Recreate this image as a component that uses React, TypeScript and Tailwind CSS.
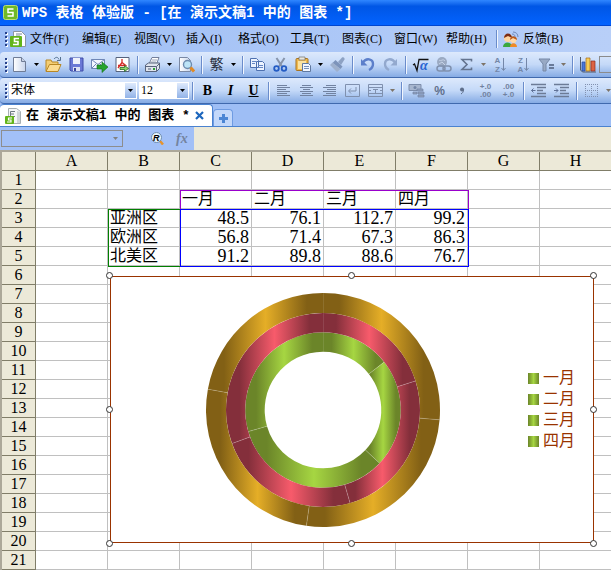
import React from 'react'

const menus = ['文件(F)', '编辑(E)', '视图(V)', '插入(I)', '格式(O)', '工具(T)', '图表(C)', '窗口(W)', '帮助(H)']

const columns = ['A', 'B', 'C', 'D', 'E', 'F', 'G', 'H']
const months = ['一月', '二月', '三月', '四月']
const regions = [
  { name: '亚洲区', values: [48.5, 76.1, 112.7, 99.2] },
  { name: '欧洲区', values: [56.8, 71.4, 67.3, 86.3] },
  { name: '北美区', values: [91.2, 89.8, 88.6, 76.7] },
]

const rings = [
  { inner: 58.3, outer: 77.8, fill: 'url(#green)' },
  { inner: 77.8, outer: 97, fill: 'url(#pink)' },
  { inner: 97, outer: 117, fill: 'url(#gold)' },
]

// content of one cell, row is 1-based and col 0 is column A
const cellText = (row: number, col: number) => {
  if (row === 2 && col > 1 && col < 6) return months[col - 2]
  const region = regions[row - 3]
  if (!region) return ''
  if (col === 1) return region.name
  if (col > 1 && col < 6) return region.values[col - 2].toFixed(1)
  return ''
}

const Grip = () => (
  <svg width="8" height="16" className="shrink-0" aria-hidden="true">
    {[1, 5, 9, 13].map((y) => (
      <g key={y}>
        <rect x="6" y={y + 1} width="2" height="2" fill="#fff" />
        <rect x="5" y={y} width="2" height="2" fill="#27418a" />
      </g>
    ))}
  </svg>
)

const Sep = () => (
  <span className="flex h-[18px] w-[7px] shrink-0 justify-center" aria-hidden="true">
    <span className="w-px bg-[#6a8ccb]" />
    <span className="w-px bg-[#f1f6fe]" />
  </span>
)

const Caret = ({ off = false }: { off?: boolean }) => (
  <button aria-label="更多" className="flex h-5 w-[11px] shrink-0 items-center justify-center">
    <svg width="5" height="3" className={off ? 'text-[#7d7468]' : 'text-black'}>
      <path d="M0 0h5L2.5 3z" fill="currentColor" />
    </svg>
  </button>
)

const Tool = ({ label, children }: { label: string; children: React.ReactNode }) => (
  <button aria-label={label} title={label} className="flex h-[22px] w-[23px] shrink-0 items-center justify-center text-black">
    {children}
  </button>
)

const Icon = ({ children }: { children: React.ReactNode }) => (
  <svg width="17" height="17" viewBox="0 0 17 17" fill="none">{children}</svg>
)

const Lines = ({ rows }: { rows: number[][] }) => (
  <Icon>
    {rows.map(([x, w], i) => (
      <rect key={i} x={x} y={3 + i * 2} width={w} height="1" fill="#7182a0" />
    ))}
  </Icon>
)

const Indent = ({ flip = false }: { flip?: boolean }) => (
  <Icon>
    <path d="M1 2.5h15M7 5.5h9M7 8.5h6M7 11.5h9M1 14.5h15" stroke="#6c7b96" strokeWidth="1.4" />
    <path d={flip ? 'M1 8.5h4M3 6.5l2 2-2 2' : 'M1.5 8.5h4M3.5 6.5l-2 2 2 2'} stroke="#5f7197" />
  </Icon>
)

const SheetLogo = () => (
  <svg width="17" height="18" viewBox="0 0 17 18" aria-hidden="true">
    <path d="M3.5 1.5h8l4 4v11h-12z" fill="#fff" stroke="#8b95a5" />
    <path d="M6 4h6M6 6h4" stroke="#778498" />
    <rect x="0" y="6" width="12" height="11" rx="1" fill="#62b51a" />
    <path d="M9 8.5H4.5v3H8v3H3" fill="none" stroke="#fff" strokeWidth="1.6" />
  </svg>
)

const TabLogo = () => (
  <svg width="17" height="18" viewBox="0 0 17 18" aria-hidden="true">
    <path d="M3.500 1.500h8l4 3v12h-12z" fill="#f4f6f7" stroke="#a9b0b4" />
    <path d="M12 4v12h3V5z" fill="#cfd6d8" />
    <path d="M10 4.500H5.500v5H10M5.500 7H9" fill="none" stroke="#6d7880" />
    <rect x="0" y="9" width="9" height="8" rx="1" fill="#62b51a" />
    <path d="M7 11H3.500v2H6v2H2" fill="none" stroke="#fff" strokeWidth="1.200" />
  </svg>
)

const StandardBar = () => (
  <div role="toolbar" aria-label="常用" className="flex h-[26px] items-center overflow-hidden rounded-l border-b border-[#4069ad] bg-linear-to-b from-[#dde9fc] via-[#c4d9f8] to-[#86abe4]">
    <Grip />
    <Tool label="新建">
      <Icon>
        <path d="M2.5 1.5h8l4 4v10h-12z" fill="url(#paper)" stroke="#6f7c96" />
        <path d="M10.500 1.500v4h4" fill="#c9d3e6" stroke="#6f7c96" />
      </Icon>
    </Tool>
    <Caret />
    <Tool label="打开">
      <Icon>
        <path d="M1 15V4h5l1 2h6v3" fill="#f3cd74" stroke="#b88724" />
        <path d="M1 15.500 4.500 8.500H16l-3 7z" fill="#fbdc92" stroke="#b88724" />
        <path d="M9 3c2-2.500 4-2 5 .5M15.500 1v3.500H12" stroke="#56718f" />
      </Icon>
    </Tool>
    <Tool label="保存">
      <Icon>
        <path d="M2 2h13v13H3l-1-1z" fill="#6b79d6" stroke="#3f4ca8" />
        <path d="M5 2h7v6H5z" fill="#eef1fb" />
        <path d="M5 11h7v4H5z" fill="#dde1f4" />
        <path d="M6 12h2v3H6z" fill="#39459b" />
      </Icon>
    </Tool>
    <Tool label="发送">
      <Icon>
        <path d="M.5 3.500h13v9H.5z" fill="#f3f7ff" stroke="#6f87b6" />
        <path d="M.5 3.500 7 8.500l6.500-5M.5 12.500 5 8M13.500 12.500 9 8" stroke="#6f87b6" />
        <path d="M6 9h5V6l6 5-6 5.500v-3.500H6z" fill="#26a32d" stroke="#127019" strokeWidth=".6" />
      </Icon>
    </Tool>
    <Tool label="输出 PDF">
      <Icon>
        <path d="M2 1.500h13v14H2z" fill="#fff" stroke="#56637d" />
        <path d="M8 3v3.500L4 12M8 6.500l4.500 3.500M4 9.500h7" stroke="#d52925" strokeWidth="1.300" />
        <path d="M6 11.500h4.500V9.500l4 3-4 3v-2H6z" fill="#8ed36c" stroke="#246a21" strokeWidth=".8" />
      </Icon>
    </Tool>
    <Sep />
    <Tool label="打印">
      <Icon>
        <path d="M5 8 8 1.500h7L12.500 8z" fill="#fff" stroke="#75809a" />
        <path d="M8 4h5M7 6h5" stroke="#9aa4bb" />
        <path d="m1.500 9 3-2h11v5.500l-3 3h-11z" fill="#dfe4ed" stroke="#59647d" />
        <path d="M1.500 10.500h11l3-3M12.500 10.500v5" stroke="#59647d" />
        <path d="M4 13h3" stroke="#536078" /><path d="M9 13h2" stroke="#2c9e34" strokeWidth="2" />
      </Icon>
    </Tool>
    <Caret />
    <Tool label="打印预览">
      <Icon>
        <path d="M1.500 1.500h8l3 3v11h-11z" fill="url(#paper)" stroke="#7b89a4" />
        <circle cx="9.500" cy="8.500" r="4" fill="#bce4f7" stroke="#6e8caf" strokeWidth="1.400" />
        <path d="m12.500 11.500 3.500 4" stroke="#e08a25" strokeWidth="3" />
      </Icon>
    </Tool>
    <Sep />
    <Tool label="繁简转换"><span className="text-sm text-[#262d3b]">繁</span></Tool>
    <Caret />
    <Sep />
    <Tool label="复制">
      <Icon>
        <path d="M1.500 2.500h6l2 2v7h-8zM7.500 5.500h6l2 2v7h-8z" fill="#edf4ff" stroke="#4e71b0" />
        <path d="M3 5.500h4M3 7.500h3M9 9.500h5M9 11.500h5" stroke="#6688c5" />
      </Icon>
    </Tool>
    <Tool label="剪切">
      <Icon>
        <path d="M4.500 2 10 10.500M12.500 2 7 10.500" stroke="#8794aa" strokeWidth="2" />
        <circle cx="4.500" cy="12.500" r="2.300" stroke="#245cc4" strokeWidth="1.800" />
        <circle cx="12" cy="12.500" r="2.300" stroke="#245cc4" strokeWidth="1.800" />
      </Icon>
    </Tool>
    <Tool label="粘贴">
      <Icon>
        <rect x="1" y="2.500" width="12" height="12" rx="1" fill="#efb94f" stroke="#a97420" />
        <path d="M3 5h8v8H3z" fill="#fbe2a0" /><path d="M4 1h6v3H4z" fill="#e9e6dd" stroke="#74706a" strokeWidth=".7" />
        <path d="M7.500 7.500h6l2 2v6h-8z" fill="#f2f6ff" stroke="#5f789f" />
        <path d="M9 10.500h5M9 12.500h5" stroke="#7791ba" />
      </Icon>
    </Tool>
    <Caret />
    <Tool label="格式刷">
      <Icon>
        <path d="M9 6 13 1.500c1.500-1 3 .5 2.500 2L12 9z" fill="#8da2c3" />
        <path d="m6.500 4 7 6.500-2 2.500-8-6z" fill="#7d94ba" />
        <path d="M3.500 6.500 1 9l7 7 3.500-3z" fill="#9eb0cc" />
      </Icon>
    </Tool>
    <Sep />
    <Tool label="撤销">
      <Icon>
        <path d="M4 6.500c3-5 10-4 10 1.500 0 3-2 5-4 6" stroke="#5c7fca" strokeWidth="2.400" /><path d="M2 3v6.500h6.500z" fill="#5c7fca" />
      </Icon>
    </Tool>
    <Tool label="恢复">
      <Icon>
        <path d="M13 6.500C10 1.500 3 2.500 3 8c0 3 2 5 4 6" stroke="#93a9ce" strokeWidth="2.400" /><path d="M15 3v6.500H8.500z" fill="#93a9ce" />
      </Icon>
    </Tool>
    <Sep />
    <Tool label="公式">
      <Icon>
        <path d="m1 9 1.500-1L5 14.500 7 3.500h9.500" stroke="#111" strokeWidth="1.300" />
        <text x="8" y="14" fontSize="14" fontStyle="italic" fontWeight="bold" fontFamily="Liberation Serif, serif" fill="#2864d2">α</text>
      </Icon>
    </Tool>
    <Tool label="超链接">
      <Icon>
        <circle cx="7" cy="6" r="5" fill="#9baac2" /><path d="M4 4c2 2 4-2 6 1M4 8l3-2 3 3" stroke="#c6d3e8" />
        <rect x="2" y="10" width="8" height="5" rx="2.500" stroke="#8091ae" strokeWidth="1.500" />
        <rect x="8" y="10" width="8" height="5" rx="2.500" stroke="#8091ae" strokeWidth="1.500" />
      </Icon>
    </Tool>
    <Tool label="求和">
      <Icon><path d="M13.500 5.500v-2H4l5 5-5 5h9.500v-2" stroke="#64748f" strokeWidth="1.600" /></Icon>
    </Tool>
    <Caret off />
    {['AZ', 'ZA'].map((order) => (
      <Tool key={order} label={order === 'AZ' ? '升序' : '降序'}>
        <span className="flex items-center font-['Liberation_Sans',sans-serif] text-[8px] leading-[9px] font-bold text-[#7487a8]">
          <span className="flex flex-col">
            <span>{order[0]}</span>
            <span>{order[1]}</span>
          </span>
          <svg width="6" height="14" viewBox="0 0 6 14" fill="none">
            <path d="M3.500 0v12M1.500 10l2 2.500 2-2.500" stroke="currentColor" />
          </svg>
        </span>
      </Tool>
    ))}
    <Tool label="筛选">
      <Icon>
        <path d="M1 3h11L8 8v7H5V8z" fill="#98a9c4" stroke="#7688a6" /><path d="M11 9h5M11 12h5" stroke="#687a99" strokeWidth="2" />
      </Icon>
    </Tool>
    <Caret off />
    <Sep />
    <Tool label="图表类型">
      <Icon>
        <path d="M1.500 1v13l2 2H17" stroke="#535b68" />
        <path d="M3 6h3v9H3z" fill="#4a77d9" stroke="#274b9e" strokeWidth=".7" />
        <path d="M7 2h4v13H7z" fill="#f6ce56" stroke="#a76814" strokeWidth=".7" />
        <path d="M12 5h4v10h-4z" fill="#dd6344" stroke="#8c2c20" strokeWidth=".7" />
      </Icon>
    </Tool>
    <span className="h-[17px] w-4 shrink-0 border border-[#8b8b8b]" />
  </div>
)

const FormatBar = () => (
  <div role="toolbar" aria-label="格式" className="flex h-[26px] items-center overflow-hidden rounded-l border-b border-[#4069ad] bg-linear-to-b from-[#dde9fc] via-[#c4d9f8] to-[#86abe4]">
    <Grip />
    <label className="ml-px flex h-[17px] w-32 shrink-0 bg-white">
      <select aria-label="字体" className="min-w-0 flex-1 appearance-none pl-0.5 text-xs leading-[17px] text-black">
        <option>宋体</option>
      </select>
      <span className="m-px flex w-[11px] items-center justify-center bg-linear-to-b from-[#dfeafc] to-[#92b3e7]">
        <svg width="5" height="3"><path d="M0 0h5L2.500 3z" /></svg>
      </span>
    </label>
    <label className="ml-0.5 flex h-[17px] w-[50px] shrink-0 bg-white">
      <select aria-label="字号" className="min-w-0 flex-1 appearance-none pl-0.5 text-xs leading-[17px] text-black">
        <option>12</option>
      </select>
      <span className="m-px flex w-[11px] items-center justify-center bg-linear-to-b from-[#dfeafc] to-[#92b3e7]">
        <svg width="5" height="3"><path d="M0 0h5L2.500 3z" /></svg>
      </span>
    </label>
    <Sep />
    <Tool label="加粗"><b className="text-sm font-black">B</b></Tool>
    <Tool label="倾斜"><b className="text-sm italic">I</b></Tool>
    <Tool label="下划线"><b className="text-sm underline">U</b></Tool>
    <Sep />
    <Tool label="左对齐"><Lines rows={[[2, 10], [2, 13], [2, 9], [2, 13], [2, 10], [2, 13]]} /></Tool>
    <Tool label="居中"><Lines rows={[[4, 9], [2, 13], [5, 7], [2, 13], [4, 9], [2, 13]]} /></Tool>
    <Tool label="右对齐"><Lines rows={[[5, 10], [2, 13], [6, 9], [2, 13], [5, 10], [2, 13]]} /></Tool>
    <Tool label="自动换行">
      <Icon><path d="M1.500 2.500h14v12h-14zM12 5v4H5M7 6.500 4.500 9 7 11.500" stroke="#7f90ae" /></Icon>
    </Tool>
    <Tool label="合并居中">
      <Icon><path d="M1.500 2.500h14v12h-14zM1.500 5.500h14M1.500 11.500h14M6 7.500h5M8.500 7.500v4M2 8.500h2M13 8.500h2" stroke="#7f90ae" /></Icon>
    </Tool>
    <Caret off />
    <Sep />
    <Tool label="货币样式">
      <Icon>
        <path d="M1 2.500h12v6H1z" fill="#a7b6cf" stroke="#7c8dab" /><circle cx="7" cy="5.500" r="1.500" fill="#7386a7" />
        <path d="M9 7h6v2H9zM10 10h6v2h-6zM10 13h6v2h-6zM5 10h4v2H5z" fill="#93a4c1" stroke="#7183a3" strokeWidth=".7" />
      </Icon>
    </Tool>
    <Tool label="百分比"><span className="font-['Liberation_Sans',sans-serif] text-xs font-bold text-[#5f6f8b]">%</span></Tool>
    <Tool label="千位分隔">
      <Icon><circle cx="8" cy="7.500" r="2" fill="#5f6f8b" /><path d="M9.500 7.500c0 2.500-1 3.500-2.500 4.500" stroke="#5f6f8b" /></Icon>
    </Tool>
    {[['+.0', '.00'], ['.00', '+.0']].map((digits, i) => (
      <Tool key={i} label={i ? '减少小数' : '增加小数'}>
        <span className="text-right font-['Liberation_Sans',sans-serif] text-[8px] leading-2 font-bold text-[#72829f]">
          {digits[0]}<br />{digits[1]}
        </span>
      </Tool>
    ))}
    <Sep />
    <Tool label="减少缩进"><Indent /></Tool>
    <Tool label="增加缩进"><Indent flip /></Tool>
    <Sep />
    <Tool label="边框">
      <Icon><path d="M2 2.500h13M2 8.500h13M2 14.500h13M2.500 2v13M8.500 2v13M14.500 2v13" stroke="#8291b0" strokeDasharray="1 1" /></Icon>
    </Tool>
    <Caret off />
  </div>
)

const point = (r: number, turn: number) => {
  const a = turn * Math.PI * 2
  return `${(r * Math.sin(a)).toFixed(2)} ${(-r * Math.cos(a)).toFixed(2)}`
}

const Doughnut = () => (
  <svg viewBox="-118 -118 236 236" width="236" height="236" className="shrink-0" role="img" aria-label="圆环图">
    {rings.map((ring, i) => {
      const values = regions[i].values
      const total = values.reduce((a, b) => a + b, 0)
      let start = 0
      return values.map((value, k) => {
        const from = start
        const to = start + value / total
        start = to
        const large = to - from > 0.5 ? 1 : 0
        return (
          <g key={`${i}-${k}`}>
            <path
              d={`M${point(ring.outer, from)}A${ring.outer} ${ring.outer} 0 ${large} 1 ${point(ring.outer, to)}L${point(ring.inner, to)}A${ring.inner} ${ring.inner} 0 ${large} 0 ${point(ring.inner, from)}Z`}
              fill={ring.fill}
            />
            <path d={`M${point(ring.inner, from)}L${point(ring.outer, from)}`} stroke="#fff" strokeOpacity=".35" strokeWidth=".6" />
          </g>
        )
      })
    })}
  </svg>
)

const handles = [
  '-top-[5px] -left-[5px]',
  '-top-[5px] left-[calc(50%-4px)]',
  '-top-[5px] -right-1',
  'top-[calc(50%-4px)] -left-[5px]',
  'top-[calc(50%-4px)] -right-1',
  '-bottom-[5px] -left-[5px]',
  '-bottom-[5px] left-[calc(50%-4px)]',
  '-bottom-[5px] -right-1',
]

const Chart = () => (
  <div className="absolute top-[124px] left-[108px] flex h-[267px] w-[484px] items-center border border-[#993300] bg-white pr-[18px] pl-[94px]">
    <Doughnut />
    <ul className="ml-auto flex flex-col gap-[3px] text-base leading-[18px] text-[#993300]">
      {months.map((m) => (
        <li key={m} className="flex items-center gap-1">
          <span className="h-[11px] w-[11px] bg-linear-to-r from-[#6b8529] via-[#a6d642] to-[#6b8529]" />
          {m}
        </li>
      ))}
    </ul>
    {handles.map((place) => (
      <span key={place} className={`absolute h-[7px] w-[7px] rounded-full border border-[#333] bg-white ${place}`} />
    ))}
  </div>
)

const Sheet = () => (
  <div className="overflow-hidden border-t-2 border-l-2 border-[#aca899] bg-white">
    <div className="relative">
      <table className="w-[610px] table-fixed border-separate border-spacing-0 text-base leading-[18px] text-black">
        <thead>
          <tr className="h-[19px]">
            <th className="w-[34px] border-r border-b border-[#807d68] bg-[#ece9d8] p-0" />
            {columns.map((c) => (
              <th key={c} scope="col" className="w-[72px] border-r border-b border-[#807d68] bg-[#ece9d8] p-0 font-normal">{c}</th>
            ))}
          </tr>
        </thead>
        <tbody>
          {Array.from({ length: 21 }, (_, i) => i + 1).map((row) => (
            <tr key={row} className="h-[19px]">
              <th scope="row" className="border-r border-b border-[#807d68] bg-[#ece9d8] p-0 font-normal">{row}</th>
              {columns.map((c, col) => {
                const text = cellText(row, col)
                const numeric = row > 2 && col > 1
                return (
                  <td
                    key={c}
                    className={`border-r border-b border-[#c0c0c0] p-0 whitespace-nowrap ${numeric ? 'pr-0.5 text-right text-lg leading-[18px]' : 'pl-0.5'}`}
                  >
                    {text}
                  </td>
                )
              })}
            </tr>
          ))}
        </tbody>
      </table>
      {/* source ranges of the chart */}
      <div className="absolute top-[38px] left-[178px] h-5 w-[289px] border border-[#9900cc]" />
      <div className="absolute top-[57px] left-[106px] h-[58px] w-[73px] border border-[#007f00]" />
      <div className="absolute top-[57px] left-[178px] h-[58px] w-[289px] border border-[#0000ff]" />
      <Chart />
    </div>
  </div>
)

export default function App() {
  return (
    <div className="w-full overflow-hidden bg-[#9ebef5] font-['Liberation_Serif','Noto_Sans_CJK_SC',serif] text-xs text-black">
      <svg width="0" height="0" className="absolute" aria-hidden="true">
        <defs>
          <linearGradient id="paper"><stop offset="0" stopColor="#fff" /><stop offset="1" stopColor="#c8d5ec" /></linearGradient>
          <linearGradient id="green">
            <stop offset=".14" stopColor="#6b8529" /><stop offset=".5" stopColor="#a6d642" /><stop offset=".86" stopColor="#6b8529" />
          </linearGradient>
          <linearGradient id="pink">
            <stop offset=".14" stopColor="#842f3b" /><stop offset=".5" stopColor="#f75b6b" /><stop offset=".86" stopColor="#842f3b" />
          </linearGradient>
          <linearGradient id="gold">
            <stop offset=".14" stopColor="#826015" /><stop offset=".5" stopColor="#e5ae27" /><stop offset=".86" stopColor="#826015" />
          </linearGradient>
        </defs>
      </svg>

      <header className="flex h-[26px] items-center gap-1 border-b border-[#0046cf] bg-linear-to-b from-[#2f86ff] via-[#0056e5] via-25% to-[#0363ff] pl-[3px]">
        <svg width="15" height="15" viewBox="0 0 15 15" aria-hidden="true">
          <rect x=".5" y=".5" width="14" height="14" rx="2" fill="#70b928" stroke="#b8df78" />
          <path d="M10.500 4H5v3.500h5V11H4.500" fill="none" stroke="#fff" strokeWidth="1.500" />
        </svg>
        <h1 className="font-['Liberation_Mono','Noto_Sans_CJK_SC',monospace] text-sm font-bold whitespace-pre text-white">WPS 表格 体验版 - [在 演示文稿1 中的 图表 *]</h1>
      </header>

      <nav className="flex h-[26px] items-center bg-linear-to-r from-[#9ebef5] to-[#b8cff8]">
        <Grip />
        <span className="mx-0.5"><SheetLogo /></span>
        {menus.map((m) => (
          <button key={m} className="w-[52px] shrink-0 pl-px text-left whitespace-nowrap">{m}</button>
        ))}
        <span className="-ml-1"><Sep /></span>
        <button className="flex shrink-0 items-center gap-1 pl-0.5 whitespace-nowrap">
          <svg width="17" height="17" viewBox="0 0 17 17" fill="none" aria-hidden="true">
            <circle cx="6" cy="7" r="4" fill="#ffd5a0" /><path d="M2 7c0-6 8-6 8 0L6 5z" fill="#7c2d14" />
            <path d="M1 16c0-6 9-6 9 0z" fill="#3ba83d" />
            <circle cx="11.500" cy="9" r="3" fill="#ffd9a8" /><path d="M8 9c0-5 7-5 7 0l-4-2z" fill="#bd5b18" />
            <path d="M8 16c0-5 7-5 7 0z" fill="#f08a26" />
            <path d="M10 3c2 0 3 1 3 3M11 1c3 0 5 2 5 5" stroke="#7189b5" />
          </svg>
          反馈(B)
        </button>
      </nav>

      <StandardBar />
      <FormatBar />

      <div role="tablist" className="flex h-[23px] items-end border-b border-[#4a82d0] pt-px">
        <div className="flex h-[22px] w-[213px] items-center gap-1 rounded-t border-t border-r border-[#4a82d0] bg-white pl-[5px]">
          <TabLogo />
          <button role="tab" aria-selected="true" className="w-[165px] shrink-0 text-left font-['Liberation_Mono','Noto_Sans_CJK_SC',monospace] text-[13px] font-bold whitespace-pre">在 演示文稿1 中的 图表 *</button>
          <button aria-label="关闭">
            <svg width="9" height="9" viewBox="0 0 9 9"><path d="m1 1 7 7M8 1 1 8" stroke="#1c66bd" strokeWidth="2.200" /></svg>
          </button>
        </div>
        <button aria-label="新建标签" className="flex h-[17px] w-5 items-center justify-center rounded-t border border-b-0 border-[#6e9be2] bg-[#c3d8fa]">
          <svg width="9" height="9" viewBox="0 0 9 9"><path d="M4.500 0v9M0 4.500h9" stroke="#4c86d4" strokeWidth="3" /></svg>
        </button>
      </div>

      <div className="flex h-[23px] bg-[#ece9d8]">
        <div className="flex w-[194px] items-center bg-[#a2c0f7] pl-px">
          <label className="flex h-[17px] w-[122px] shrink-0 items-center border border-[#8d8d8d] pr-1">
            <input aria-label="名称框" className="min-w-0 flex-1 bg-transparent" />
            <svg width="5" height="3"><path d="M0 0h5L2.500 3z" fill="#808080" /></svg>
          </label>
          <button aria-label="查找" className="ml-7 shrink-0">
            <svg width="13" height="13" viewBox="0 0 13 13">
              <path d="m9 9 3 3.500" stroke="#e6942e" strokeWidth="2.500" />
              <circle cx="5.500" cy="5.500" r="5" fill="#e8f5fc" stroke="#6d8cae" />
              <text x="2" y="9" fontSize="9" fontWeight="bold" fontStyle="italic" fontFamily="Liberation Sans, sans-serif">R</text>
            </svg>
          </button>
          <button aria-label="插入函数" className="ml-3 text-sm leading-4 font-bold text-[#74849f] italic">fx</button>
        </div>
      </div>

      <Sheet />
    </div>
  )
}
